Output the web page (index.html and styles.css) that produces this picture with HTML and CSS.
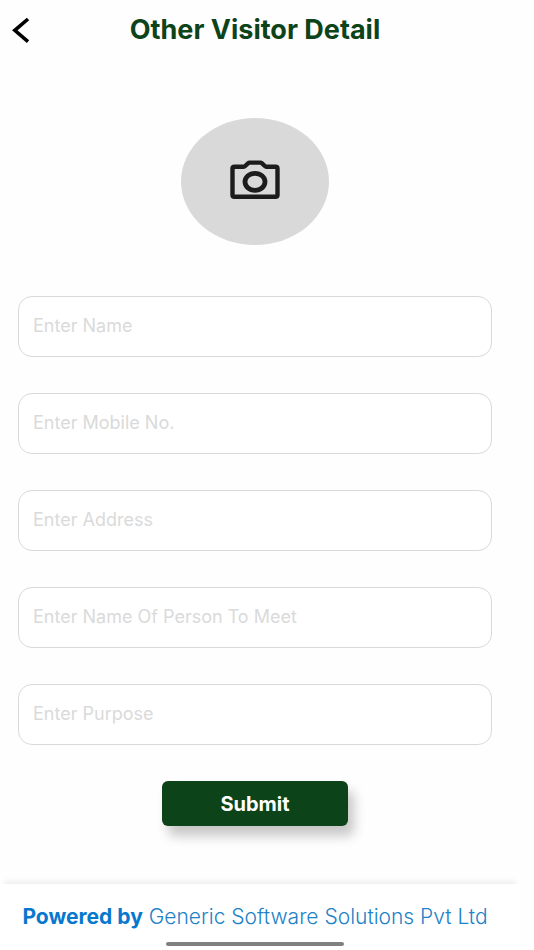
FILE: index.html
```html
<!DOCTYPE html>
<html lang="en">
<head>
<meta charset="utf-8">
<meta name="viewport" content="width=device-width, initial-scale=1">
<title>Other Visitor Detail</title>
<link rel="stylesheet" href="styles.css">
</head>
<body>
<div class="screen">
  <header class="topbar">
    <button class="back" type="button" aria-label="Back">
      <svg width="18" height="26" viewBox="0 0 18 26" fill="none" stroke="#000" stroke-width="3.600"><path d="M16 2 2.800 13.300 16 24.600"/></svg>
    </button>
    <h1 class="title">Other Visitor Detail</h1>
  </header>
  <main class="content">
    <button class="photo" type="button" aria-label="Take photo">
      <svg width="50" height="40" viewBox="0 0 50 40" fill="none" stroke="#1c1c1c"><path stroke-width="4.400" stroke-linejoin="round" d="M4.500 6.700H13.500Q14.500 6.700 15.200 6L18.200 3.200Q18.800 2.600 19.600 2.600H30.400Q31.200 2.600 31.800 3.200L34.800 6Q35.500 6.700 36.500 6.700H45.500Q47.500 6.700 47.500 8.500V35Q47.500 36.700 45.500 36.700H4.500Q2.500 36.700 2.500 35V8.500Q2.500 6.700 4.500 6.700Z"/><ellipse stroke-width="4.800" cx="25" cy="21.800" rx="10" ry="8.500"/></svg>
    </button>
    <form class="form">
      <input class="field" type="text" placeholder="Enter Name" aria-label="Name">
      <input class="field" type="tel" placeholder="Enter Mobile No." aria-label="Mobile number">
      <input class="field" type="text" placeholder="Enter Address" aria-label="Address">
      <input class="field" type="text" placeholder="Enter Name Of Person To Meet" aria-label="Name of person to meet">
      <input class="field" type="text" placeholder="Enter Purpose" aria-label="Purpose">
      <button class="submit" type="submit">Submit</button>
    </form>
  </main>
  <footer class="footer">
    <p class="credit"><strong>Powered by</strong> Generic Software Solutions Pvt Ltd</p>
    <div class="home-bar"></div>
  </footer>
</div>
</body>
</html>
```
FILE: styles.css
```css
* {
  box-sizing: border-box;
}

body {
  margin: 0;
  background: #fefefe;
  font-family: Inter, "Liberation Sans", sans-serif;
}

.screen {
  display: flex;
  flex-direction: column;
  min-height: 100vh;
  padding-right: 14px;
}

.topbar {
  display: grid;
  grid-template-columns: 36px 1fr 36px;
  align-items: center;
  height: 60px;
  margin-right: 10px;
}

.back {
  display: flex;
  padding: 0 0 0 12px;
  border: 0;
  background: none;
}

.title {
  margin: 0;
  color: #0d4319;
  font-size: 27px;
  font-weight: 700;
  line-height: 32px;
  text-align: center;
  white-space: nowrap;
}

.content {
  flex: 1;
  display: flex;
  flex-direction: column;
  align-items: center;
  margin-right: 10px;
  padding: 58px 18px 36px;
}

.photo {
  display: flex;
  align-items: center;
  justify-content: center;
  width: 148px;
  height: 127px;
  padding: 0 0 4px;
  border: 0;
  border-radius: 50%;
  background: #d9d9d9;
}

.form {
  display: flex;
  flex-direction: column;
  align-items: center;
  gap: 36px;
  width: 100%;
  margin-top: 51px;
}

.field {
  width: 100%;
  height: 61px;
  padding: 0 14px 2px;
  border: 1px solid #d9d9d9;
  border-radius: 14px;
  background: #fff;
  color: #222;
  font-family: inherit;
  font-size: 18px;
}

.field::placeholder {
  color: #dadada;
  opacity: 1;
}

.submit {
  width: 186px;
  height: 45px;
  padding: 0;
  border: 0;
  border-radius: 6px;
  background: #0d4319;
  box-shadow: 6px 10px 12px rgba(0, 0, 0, 0.22);
  color: #fff;
  font-family: inherit;
  font-size: 20px;
  font-weight: 700;
}

.footer {
  display: flex;
  flex-direction: column;
  align-items: center;
  height: 66px;
  padding-top: 20px;
  background: #fff;
  box-shadow: 0 -6px 6px -4px rgba(0, 0, 0, 0.08);
}

.credit {
  margin: 0 10px 0 0;
  color: #2182c7;
  font-size: 21px;
  font-weight: 300;
  line-height: 26px;
  white-space: nowrap;
}

.credit strong {
  color: #0878cf;
  font-weight: 700;
}

.home-bar {
  width: 178px;
  height: 4px;
  margin: 12px 10px 0 0;
  border-radius: 2px;
  background: #808080;
}
```
